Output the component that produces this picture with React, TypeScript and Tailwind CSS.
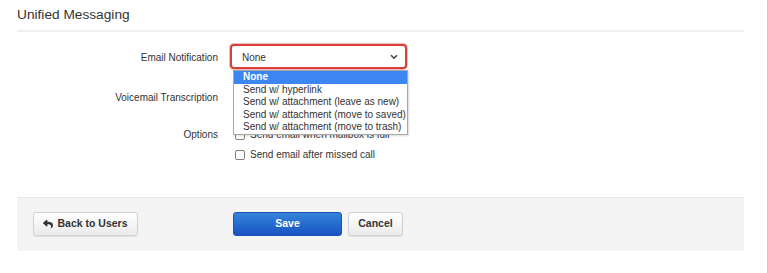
import React from "react";
import { FaReply } from "react-icons/fa";

const options = [
  "None",
  "Send w/ hyperlink",
  "Send w/ attachment (leave as new)",
  "Send w/ attachment (move to saved)",
  "Send w/ attachment (move to trash)",
];

function Chevron() {
  return (
    <svg width="8" height="6" viewBox="0 0 8 6">
      <path d="M1 1.2l3 3 3-3" fill="none" stroke="#444" strokeWidth="1.6" />
    </svg>
  );
}

export default function App() {
  return (
    <div className="relative w-[768px] h-[273px] overflow-hidden bg-white border-r border-[#c9c9c9] font-['Liberation_Sans',Arial,sans-serif] text-[#333]">
      <div className="ml-[17px] w-[727px]">
        <div className="pt-[7px] text-[13.7px] leading-[16px] text-[#333]">Unified Messaging</div>
        <div className="mt-[7px] h-[2px] bg-[#efefef]" />

        {/* Row 1 */}
        <div className="mt-[12px] flex items-center h-[25px]">
          <div className="w-[201px] text-right text-[10px] leading-[13px] pt-[2px]">Email Notification</div>
          <div className="ml-[15px] relative">
            <div className="-ml-[3px] w-[177px] h-[25px] rounded-[4px] border-[2px] border-[#d7403a] shadow-[0_0_0_1px_rgba(215,64,58,0.35)] bg-white flex items-center justify-between pl-[10px] pr-[7px]">
              <span className="text-[10px] leading-[13px] pt-[1px]">None</span>
              <Chevron />
            </div>
            <div className="absolute z-10 top-[26px] left-0 w-[175px] bg-white border border-[#a7a7a7] shadow-[1px_1px_2px_rgba(0,0,0,0.15)]">
              {options.map((o, i) => (
                <div
                  key={o}
                  className={
                    i === 0
                      ? "h-[12.5px] leading-[12.5px] pl-[9px] whitespace-nowrap text-[10px] bg-[#3b86f0] text-white font-bold"
                      : "h-[12.5px] leading-[12.5px] pl-[9px] whitespace-nowrap text-[10px] text-[#333]"
                  }
                >
                  {o}
                </div>
              ))}
            </div>
          </div>
        </div>

        {/* Row 2 */}
        <div className="mt-[16px] flex items-center h-[25px]">
          <div className="w-[201px] text-right text-[10px] leading-[13px]">Voicemail Transcription</div>
          <div className="ml-[15px] w-[172px] h-[23px] rounded-[3px] border border-[#bbb] bg-white" />
        </div>

        {/* Row 3 */}
        <div className="mt-[18px] flex items-start">
          <div className="w-[201px] text-right text-[10px] leading-[14px]">Options</div>
          <div className="ml-[15px] flex flex-col gap-[6px]">
            <label className="flex items-center h-[14px]">
              <span className="ml-[2px] w-[10px] h-[10px] rounded-[2px] border border-[#808080] bg-white" />
              <span className="ml-[5px] text-[10px] leading-[14px]">Send email when mailbox is full</span>
            </label>
            <label className="flex items-center h-[14px]">
              <span className="ml-[2px] w-[10px] h-[10px] rounded-[2px] border border-[#808080] bg-white" />
              <span className="ml-[5px] text-[10px] leading-[14px]">Send email after missed call</span>
            </label>
          </div>
        </div>

        {/* Footer */}
        <div className="mt-[35px] h-[54px] bg-[#f4f4f4] border-t border-[#e6e6e6] flex items-start pt-[14px] pl-[16px]">
          <button className="h-[24px] w-[105px] rounded-[3px] border border-[#d2d2d2] bg-gradient-to-b from-[#ffffff] to-[#ebebeb] shadow-[0_1px_1px_rgba(0,0,0,0.08)] flex items-center justify-center gap-[4px] text-[10.5px] font-bold text-[#333]">
            <FaReply className="w-[10px] h-[10px] text-[#333]" />
            <span>Back to Users</span>
          </button>
          <button className="ml-[95px] h-[24px] w-[109px] rounded-[3px] border border-[#1d50b3] bg-gradient-to-b from-[#3584da] to-[#1a53c4] flex items-center justify-center text-[10.5px] font-bold text-white">
            Save
          </button>
          <button className="ml-[6px] h-[24px] w-[55px] rounded-[3px] border border-[#d2d2d2] bg-gradient-to-b from-[#ffffff] to-[#ebebeb] shadow-[0_1px_1px_rgba(0,0,0,0.08)] flex items-center justify-center text-[10.5px] font-bold text-[#333]">
            Cancel
          </button>
        </div>
      </div>
    </div>
  );
}
